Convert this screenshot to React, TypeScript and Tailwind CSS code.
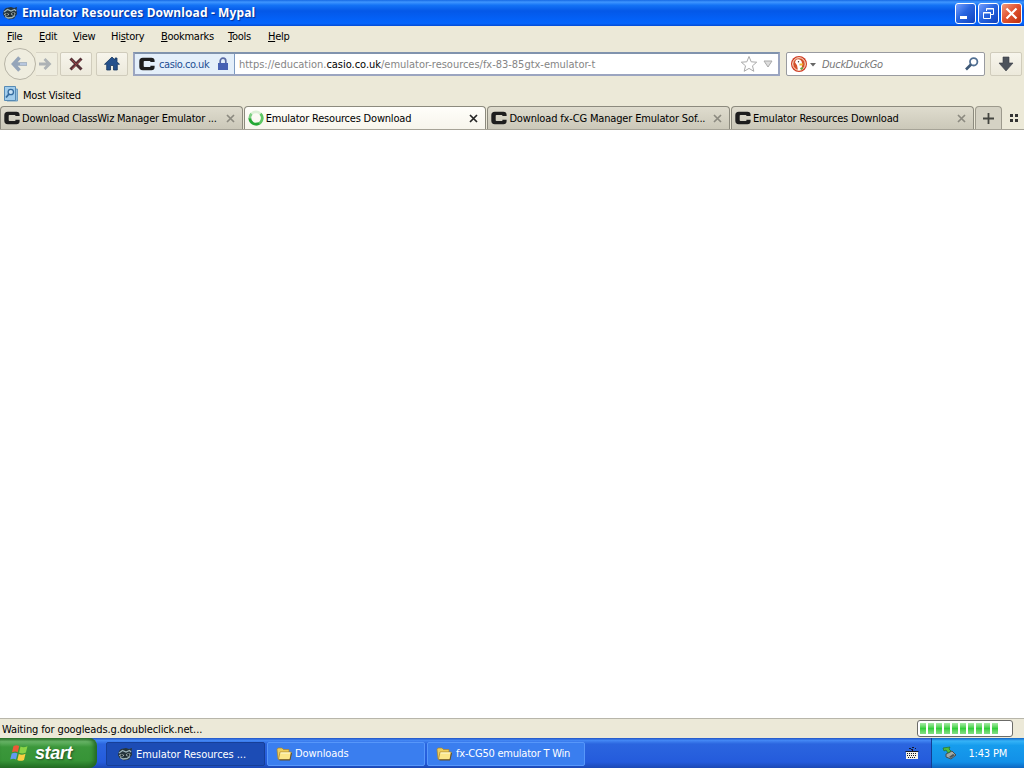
// src/App.tsx
import clsx from "clsx";

const menus = [
  { label: "File", key: 0, width: "w-[32px]" },
  { label: "Edit", key: 0, width: "w-[34px]" },
  { label: "View", key: 0, width: "w-[38px]" },
  { label: "History", key: 2, width: "w-[50px]" },
  { label: "Bookmarks", key: 0, width: "w-[67px]" },
  { label: "Tools", key: 0, width: "w-[40px]" },
  { label: "Help", key: 0, width: "w-[40px]" },
];

const tabs = [
  { title: "Download ClassWiz Manager Emulator ...", active: false, spacing: "tracking-[-0.22px]" },
  { title: "Emulator Resources Download", active: true, spacing: "tracking-[-0.2px]" },
  { title: "Download fx-CG Manager Emulator Sof...", active: false, spacing: "tracking-[-0.16px]" },
  { title: "Emulator Resources Download", active: false, spacing: "tracking-[-0.2px]" },
];

const CasioIcon = () => (
  <svg width="16" height="16" viewBox="0 0 16 16" className="shrink-0">
    <path
      d="M15.600 6V4.800c0-2.100-1.100-3-3.200-3H3.800C1.400 1.800.3 3 .3 5.300v5.400c0 2.300 1.100 3.500 3.500 3.500h8.600c2.100 0 3.200-.9 3.200-3V9.700h-4.200v.8c0 .4-.2.600-.6.600H5.500c-.5 0-.8-.3-.8-.8V5.700c0-.5.3-.8.8-.8h5.300c.4 0 .6.200.6.600V6z"
      fill="#1e1e1e"
    />
  </svg>
);

const MypalIcon = () => (
  <svg width="16" height="16" viewBox="0 0 16 16" className="shrink-0">
    <path d="M4 3l5-1 3 1 3-1-.5 3 .5 4-3 4.500-5 1L2.500 12 1 9l1-4z" fill="#26353c" />
    <path d="M2 7l3.500-2.500L9 6l3.500-1.500L14 6M3 11.500l3 1.500 4-.5 3-2" fill="none" stroke="#9eb4ba" strokeWidth="1.300" />
    <path d="M2 9.500c1.500-2 4-2 5 0-1 1.500-3.500 2-5 0zM9 9c1-2 3.500-2.300 4.500-.5-.5 2-3.500 2.500-4.500.5z" fill="#c1cbc8" />
    <circle cx="4.700" cy="9.400" r="1.200" fill="#17272c" />
    <circle cx="11.300" cy="8.800" r="1.200" fill="#17272c" />
    <path d="M7 11l1.500-1 1 1.500" stroke="#17272c" fill="none" />
  </svg>
);

const Spinner = () => (
  <svg width="16" height="16" viewBox="0 0 16 16" className="shrink-0" fill="none" strokeWidth="2.700">
    <circle cx="8" cy="8" r="6.200" stroke="#dcf0d6" />
    <path d="M12.500 3.700A6.200 6.200 0 0 1 8 14.200" stroke="#5fc764" />
    <path d="M11 13.400A6.200 6.200 0 0 1 1.800 8" stroke="#24a834" />
    <path d="M1.800 8.500A6.200 6.200 0 0 1 3.500 3.700" stroke="#7fd083" />
  </svg>
);

const FolderIcon = () => (
  <svg width="16" height="16" viewBox="0 0 16 16" className="shrink-0">
    <path d="M1 3.500L2 2h4l1.500 1.500H13V13H2z" fill="#edcd5b" stroke="#a9822b" strokeWidth=".7" />
    <path d="M4 6H15.300L14 13.500H2.500z" fill="#fbe68a" stroke="#a57e2a" strokeWidth=".7" />
    <path d="M4.500 7h9.500" stroke="#fffbd5" />
    <path d="M3.500 14h10.500l1.500-7" stroke="#614f2b" fill="none" />
  </svg>
);

const CloseGlyph = ({ active }: { active: boolean }) => (
  <svg width="9" height="9" viewBox="0 0 9 9" className="shrink-0">
    <path d="M1 1l7 7M8 1L1 8" stroke={active ? "#252525" : "#8c8a80"} strokeWidth="1.700" />
  </svg>
);

const TitleBar = () => (
  <div className="flex h-[26px] items-center bg-[linear-gradient(180deg,#1669e4_0%,#3f96ff_8%,#1473f5_20%,#0458e8_42%,#0362f9_78%,#0565fb_90%,#044bd4_100%)] pl-0.5 pr-0.5">
    <MypalIcon />
    <span className="ml-1 font-['Noto_Sans',sans-serif] text-[12px] font-bold tracking-[0.13px] text-white [text-shadow:1px_1px_1px_#0a2f91]">
      Emulator Resources Download - Mypal
    </span>
    <div className="ml-auto flex gap-[2px]">
      <div className="h-[21px] w-[21px] rounded-[3px] border border-white bg-[linear-gradient(135deg,#759fff,#2865e0_45%,#0f42bf)]">
        <svg width="19" height="19" viewBox="0 0 19 19">
          <path d="M4 13.500h7" stroke="white" strokeWidth="3" />
        </svg>
      </div>
      <div className="h-[21px] w-[21px] rounded-[3px] border border-white bg-[linear-gradient(135deg,#759fff,#2865e0_45%,#0f42bf)]">
        <svg width="19" height="19" viewBox="0 0 19 19" fill="none" stroke="white">
          <path d="M7.500 7V4.500h7v6H12M7 5h8M4.500 8.500h7v6h-7zM4 9h8" />
        </svg>
      </div>
      <div className="h-[21px] w-[21px] rounded-[3px] border border-white bg-[linear-gradient(135deg,#f29b7d,#e25533_45%,#bd2f0c)]">
        <svg width="19" height="19" viewBox="0 0 19 19">
          <path d="M4.500 4.500l10 10M14.500 4.500l-10 10" stroke="white" strokeWidth="2.200" />
        </svg>
      </div>
    </div>
  </div>
);

const MenuBar = () => (
  <div className="flex h-5 items-center pl-[7px] pt-0.5 tracking-[-0.28px]">
    {menus.map((m) => (
      <span key={m.label} className={clsx("shrink-0 whitespace-nowrap", m.width)}>
        {m.label.slice(0, m.key)}
        <span className="underline underline-offset-1">{m.label[m.key]}</span>
        {m.label.slice(m.key + 1)}
      </span>
    ))}
  </div>
);

const toolButton =
  "flex h-6 shrink-0 items-center justify-center rounded-[2px] border border-[#d0ccbc] bg-linear-to-b from-[#f7f5ec] to-[#ece9db]";

const Toolbar = () => (
  <div className="flex h-9 items-center">
    <div className="ml-1 flex h-8 w-8 shrink-0 items-center justify-center rounded-full border border-[#b7b4a6] bg-[#efeddf]">
      <svg width="18" height="18" viewBox="0 0 18 18">
        <path d="M8.500 2.500L2.500 9l6 6.500M3.500 9H16" fill="none" stroke="#95a5b9" strokeWidth="3.600" />
        <path d="M9 9h6.500" stroke="#b7c6dd" strokeWidth="2" />
      </svg>
    </div>
    <div className="flex h-6 w-[22px] shrink-0 items-center justify-center rounded-r-[2px] border border-l-0 border-[#d8d4c5] bg-[#efeddf] pr-1">
      <svg width="14" height="14" viewBox="0 0 14 14">
        <path d="M6.500 2l5 5-5 5M1 7h9" fill="none" stroke="#adb2b5" strokeWidth="2.800" />
      </svg>
    </div>
    <div className={clsx(toolButton, "ml-[2px] w-8")}>
      <svg width="14" height="14" viewBox="0 0 14 14">
        <path d="M1.500 1.500l11 11M12.500 1.500l-11 11" stroke="#543137" strokeWidth="3" />
        <path d="M2.500 2.500L7 7M3 12l8.500-9" stroke="#a34548" strokeWidth="1" />
      </svg>
    </div>
    <div className={clsx(toolButton, "ml-1 w-8")}>
      <svg width="16" height="16" viewBox="0 0 16 16">
        <path d="M8 1L.5 8.300h2.200V14H6.500V9.500h3V14h3.800V8.300h2.200L13 5.800V2h-2v2z" fill="#24508c" stroke="#173761" strokeWidth=".8" />
      </svg>
    </div>
    <div className="ml-[5px] flex h-6 w-[647px] shrink-0 items-center border-2 border-[#9ba5c0] border-t-[#8093ad] bg-white">
      <div className="flex h-5 w-[100px] shrink-0 items-center border-r border-[#7e9bc2] bg-[#e4effa] pl-1">
        <CasioIcon />
        <span className="ml-1 w-[57px] whitespace-nowrap pt-0.5 tracking-[-0.42px] text-[#1d4e93]">casio.co.uk</span>
        <svg width="12" height="14" viewBox="0 0 12 14" className="ml-px shrink-0">
          <path d="M3.200 7V4a2.800 2.800 0 0 1 5.600 0v3" fill="none" stroke="#596aa5" strokeWidth="1.700" />
          <path d="M1 6h10v7H1z" fill="#4761b3" />
        </svg>
      </div>
      <span className="ml-1 whitespace-nowrap pt-0.5 tracking-[-0.02px] text-[#858585]">
        https://education.<span className="text-black">casio.co.uk</span>/emulator-resources/fx-83-85gtx-emulator-t
      </span>
      <svg width="18" height="18" viewBox="0 0 18 18" className="ml-auto mr-[5px] shrink-0">
        <path d="M9 1.500l2.200 5.300 5.500.4-4.200 3.600 1.300 5.500L9 13.400l-4.800 2.900 1.300-5.500L1.300 7.200l5.500-.4z" fill="#fff" stroke="#aaa" />
      </svg>
      <svg width="10" height="8" viewBox="0 0 10 8" className="mr-[5px] shrink-0">
        <path d="M1 1h8L5 7z" fill="#ddd" stroke="#aaa" />
      </svg>
    </div>
    <div className="ml-1.5 flex h-6 w-[199px] shrink-0 items-center rounded-[2px] border border-[#999ba0] bg-white pl-1 pr-[5px]">
      <svg width="16" height="16" viewBox="0 0 16 16" className="shrink-0">
        <circle cx="8" cy="8" r="8" fill="#cf3d24" />
        <circle cx="8" cy="8" r="6.300" fill="#d4512c" stroke="#fff4dc" strokeWidth="1" />
        <path d="M5 4c2-2 6 0 6 3v3l-1 4-3 .3-1-5-2-3z" fill="#fff" />
        <path d="M8.500 7.500h4l-1 2h-3z" fill="#efb52e" />
        <path d="M9 12l3-1v2l-2 1z" fill="#69a542" />
        <circle cx="7.500" cy="5.800" r=".7" fill="#333" />
      </svg>
      <svg width="6" height="4" viewBox="0 0 6 4" className="ml-[3px] mt-px shrink-0">
        <path d="M0 0h6L3 3.500z" fill="#666" />
      </svg>
      <span className="ml-1.5 pt-0.5 italic tracking-[-0.3px] text-[#777]">DuckDuckGo</span>
      <svg width="14" height="14" viewBox="0 0 14 14" className="ml-auto" fill="none">
        <circle cx="8.700" cy="4.800" r="3.700" stroke="#527093" strokeWidth="1.800" />
        <path d="M6 7.500L1 12.500" stroke="#3e5876" strokeWidth="2.600" />
      </svg>
    </div>
    <div className={clsx(toolButton, "ml-[5px] w-8")}>
      <svg width="16" height="16" viewBox="0 0 16 16">
        <path d="M5 1h6v6h4l-7 8-7-8h4z" fill="#4d535c" stroke="#373b43" strokeWidth=".6" />
      </svg>
    </div>
  </div>
);

const BookmarksBar = () => (
  <div className="flex h-6 items-center pl-1">
    <svg width="14" height="16" viewBox="0 0 14 16">
      <path d="M3 3h10.500v12H3z" fill="#92bddc" stroke="#5d91ba" strokeWidth=".8" />
      <path d="M.5.5h11v14H.5z" fill="#a2cdec" stroke="#568bb5" />
      <circle cx="6.800" cy="6" r="2.700" fill="#c8e2f5" stroke="#346b9e" strokeWidth="1.300" />
      <path d="M5 8l-3 3.500" stroke="#346b9e" strokeWidth="1.800" />
    </svg>
    <span className="ml-[5px] mt-[3px] tracking-[-0.2px]">Most Visited</span>
  </div>
);

const TabStrip = () => (
  <div className="flex h-6 items-end border-b border-[#a6a397]">
    {tabs.map((tab, i) => (
      <div
        key={i}
        className={clsx(
          "mr-[1.2px] flex h-[23px] w-[242.5px] shrink-0 items-center rounded-t-[4px] border border-b-0 border-[#8c8a7e] pl-[3px] pr-[7px]",
          tab.active
            ? "bg-linear-to-b from-[#fffefa] to-[#f7f5ec]"
            : "bg-linear-to-b from-[#dfdcce] to-[#cbc8b9]"
        )}
      >
        {tab.active ? <Spinner /> : <CasioIcon />}
        <span className={clsx("ml-0.5 whitespace-nowrap pt-0.5", tab.spacing)}>{tab.title}</span>
        <span className="ml-auto">
          <CloseGlyph active={tab.active} />
        </span>
      </div>
    ))}
    <div className="flex h-[23px] w-[27px] items-center justify-center rounded-t-[4px] border border-b-0 border-[#9c998c] bg-[#d5d2c4]">
      <svg width="11" height="11" viewBox="0 0 11 11">
        <path d="M5.500 0v11M0 5.500h11" stroke="#444540" strokeWidth="1.800" />
      </svg>
    </div>
    <div className="mb-[7px] ml-2 grid grid-cols-2 gap-[2px]">
      <i className="h-[3px] w-[3px] bg-[#333]" />
      <i className="h-[3px] w-[3px] bg-[#333]" />
      <i className="h-[3px] w-[3px] bg-[#333]" />
      <i className="h-[3px] w-[3px] bg-[#333]" />
    </div>
  </div>
);

const StatusBar = () => (
  <div className="flex h-5 items-center border-t border-[#b8b6aa] pl-[2px] pr-[11px]">
    <span className="mt-0.5 tracking-[-0.12px]">Waiting for googleads.g.doubleclick.net...</span>
    <div className="ml-auto flex h-[17px] w-24 gap-[2px] rounded-[3px] border border-[#6b6b68] bg-white px-[2px] py-[2px]">
      {Array.from({ length: 10 }, (_, i) => (
        <div key={i} className="h-full w-[6px] bg-linear-to-b from-[#a4eba5] via-[#31cf3b] to-[#83df85]" />
      ))}
    </div>
  </div>
);

const Taskbar = () => (
  <div className="flex h-[30px] bg-[linear-gradient(180deg,#2053c5_0%,#4387f4_8%,#2b65df_20%,#245bdc_80%,#1b48b5_100%)] text-white">
    <div className="flex w-[97px] items-center rounded-r-[8px] bg-[linear-gradient(180deg,#2f7b2e_0%,#68b467_12%,#3b973b_30%,#379437_75%,#246f25_100%)] pl-2.5 shadow-[inset_-3px_0_4px_#236823]">
      <svg width="19" height="18" viewBox="0 0 19 18">
        <path d="M3.500 2C6 .7 7.500 1 9.200 2L7.700 8.200C6 7 4.300 7.300 2 8.300z" fill="#ed5937" />
        <path d="M10.500 2.600c2 1 4 1 7-.3L15.900 8.500c-2.600 1.300-4.600 1.300-6.800.2z" fill="#8bd346" />
        <path d="M1.700 9.500c2.600-1.200 4.200-1 5.700-.1L6 15.500c-2-1.200-3.600-1-5.800 0z" fill="#629af1" />
        <path d="M8.800 10c2 1 4 1 6.700-.2L14 16c-2.500 1.200-4.500 1.100-6.700 0z" fill="#fbce42" />
      </svg>
      <span className="ml-1.5 font-['Liberation_Sans',sans-serif] text-[18px] font-bold italic leading-none tracking-[-0.4px] [font-stretch:normal] [text-shadow:1px_1px_2px_#244e24]">
        start
      </span>
    </div>
    <div className="ml-[9px] flex items-center gap-[2px] pt-px">
      <div className="flex h-6 w-[159px] items-center rounded-[2px] border border-[#163f98] bg-[#1c4cb5] pl-[10px]">
        <MypalIcon />
        <span className="ml-[3px] mt-0.5 whitespace-nowrap tracking-[-0.05px]">Emulator Resources ...</span>
      </div>
      <div className="flex h-6 w-[158px] items-center rounded-[2px] border border-[#5797fa] bg-[#3a7eef] pl-2">
        <FolderIcon />
        <span className="ml-[3px] tracking-[-0.1px]">Downloads</span>
      </div>
      <div className="flex h-6 w-[158px] items-center rounded-[2px] border border-[#5797fa] bg-[#3a7eef] pl-2">
        <FolderIcon />
        <span className="ml-1 tracking-[-0.22px]">fx-CG50 emulator T Win</span>
      </div>
    </div>
    <svg width="14" height="14" viewBox="0 0 14 14" className="ml-auto mr-3 mt-[9px]">
      <path d="M4 1.500h2M7 .5h2M6 2.500h2M10 1.500h1M7 3.500h1" stroke="#151b29" />
      <path d="M1 5h12v7H1z" fill="#f4f3ea" />
      <path d="M.5 4.500h13" stroke="#151b29" />
      <path d="M2 6.500h10M2 8.500h10M3 10.500h8" stroke="#151b29" strokeDasharray="1 1" />
    </svg>
    <div className="flex w-[93px] items-center border-l border-[#123e94] bg-[linear-gradient(180deg,#1265c8_0%,#35b3f7_10%,#169ced_25%,#1290e8_80%,#0d66c1_100%)] pl-[10px]">
      <svg width="16" height="16" viewBox="0 0 16 16">
        <path d="M4 9l6-3 4 4-5 4-5-2z" fill="#a3aaa5" stroke="#424e57" />
        <path d="M7 12l4-3 2 1-4 3z" fill="#47545c" />
        <path d="M1 3l7-1-1 2 2 2-3 2-2-3-2 1z" fill="#50bd3c" stroke="#286d29" strokeWidth=".7" />
      </svg>
      <span className="ml-auto mr-[17px] mt-0.5 whitespace-nowrap tracking-[-0.2px]">1:43 PM</span>
    </div>
  </div>
);

const App = () => {
  return (
    <div className="flex h-screen w-full flex-col overflow-hidden bg-[#ece9d8] font-['DejaVu_Sans_Condensed','DejaVu_Sans',sans-serif] text-[11px] leading-[14px] text-black [font-stretch:condensed]">
      <TitleBar />
      <MenuBar />
      <Toolbar />
      <BookmarksBar />
      <TabStrip />
      <main className="flex-1 bg-white" />
      <StatusBar />
      <Taskbar />
    </div>
  );
};

export default App;
